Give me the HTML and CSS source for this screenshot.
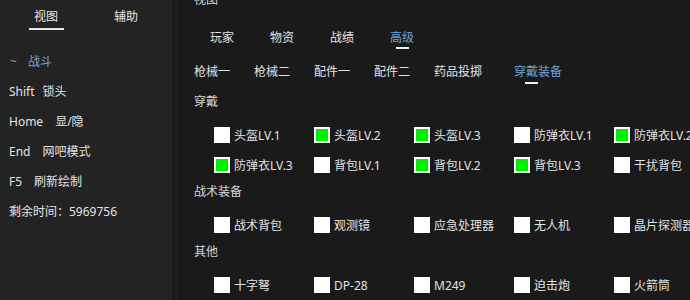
FILE: index.html
```html
<!DOCTYPE html>
<html lang="zh">
<head>
<meta charset="utf-8">
<link rel="stylesheet" href="styles.css">
</head>
<body>
<div class="app">
  <aside class="side">
    <div class="side-tabs">
      <div class="side-tab active">视图</div>
      <div class="side-tab">辅助</div>
    </div>
    <ul class="side-list">
      <li class="side-item current"><span class="tilde">~</span>战斗</li>
      <li class="side-item"><span class="key key-shift">Shift</span>锁头</li>
      <li class="side-item"><span class="key">Home</span>显/隐</li>
      <li class="side-item"><span class="key">End</span>网吧模式</li>
      <li class="side-item"><span class="key">F5</span>刷新绘制</li>
      <li class="side-item">剩余时间：5969756</li>
    </ul>
  </aside>
  <div class="divider"></div>
  <main class="main">
    <div class="title">视图</div>
    <div class="tabs tabs-top">
      <div class="tab">玩家</div>
      <div class="tab">物资</div>
      <div class="tab">战绩</div>
      <div class="tab active ul-center">高级</div>
    </div>
    <div class="tabs tabs-sub">
      <div class="tab">枪械一</div>
      <div class="tab">枪械二</div>
      <div class="tab">配件一</div>
      <div class="tab">配件二</div>
      <div class="tab wide">药品投掷</div>
      <div class="tab active ul-left">穿戴装备</div>
    </div>

    <div class="section-label">穿戴</div>
    <div class="grid">
      <label class="cb"><span class="box"></span>头盔LV.1</label>
      <label class="cb"><span class="box on"></span>头盔LV.2</label>
      <label class="cb"><span class="box on"></span>头盔LV.3</label>
      <label class="cb"><span class="box"></span>防弹衣LV.1</label>
      <label class="cb"><span class="box on"></span>防弹衣LV.2</label>
      <label class="cb"><span class="box on"></span>防弹衣LV.3</label>
      <label class="cb"><span class="box"></span>背包LV.1</label>
      <label class="cb"><span class="box on"></span>背包LV.2</label>
      <label class="cb"><span class="box on"></span>背包LV.3</label>
      <label class="cb"><span class="box"></span>干扰背包</label>
    </div>

    <div class="section-label">战术装备</div>
    <div class="grid">
      <label class="cb"><span class="box"></span>战术背包</label>
      <label class="cb"><span class="box"></span>观测镜</label>
      <label class="cb"><span class="box"></span>应急处理器</label>
      <label class="cb"><span class="box"></span>无人机</label>
      <label class="cb"><span class="box"></span>晶片探测器</label>
    </div>

    <div class="section-label">其他</div>
    <div class="grid">
      <label class="cb"><span class="box"></span>十字弩</label>
      <label class="cb"><span class="box"></span>DP-28</label>
      <label class="cb"><span class="box"></span>M249</label>
      <label class="cb"><span class="box"></span>迫击炮</label>
      <label class="cb"><span class="box"></span>火箭筒</label>
    </div>
  </main>
</div>
</body>
</html>
```

FILE: styles.css
```css
html, body {
  margin: 0;
  padding: 0;
  width: 690px;
  height: 300px;
  overflow: hidden;
  background: #1a1a1a;
}

body {
  font-family: "Noto Sans", "Noto Sans CJK SC", sans-serif;
  font-size: 12px;
  color: #e2e2e2;
}

.app {
  display: flex;
  width: 690px;
  height: 300px;
  overflow: hidden;
}

/* Sidebar */
.side {
  width: 172px;
  flex: none;
  background: #232323;
  height: 300px;
}

.side-tabs {
  display: flex;
  padding-left: 6px;
  height: 34px;
}

.side-tab {
  position: relative;
  width: 80px;
  text-align: center;
  line-height: 34px;
  color: #e6e6e6;
}

.side-tab.active::after {
  content: "";
  position: absolute;
  left: 23px;
  width: 35px;
  top: 28px;
  height: 2px;
  background: #e8e8e8;
}

.side-list {
  list-style: none;
  margin: 13px 0 0;
  padding: 0 0 0 9px;
}

.side-item {
  height: 30px;
  line-height: 30px;
  white-space: nowrap;
  color: #e2e2e2;
}

.side-item.current {
  color: #6fa3d6;
}

.tilde {
  color: #8a9cb0;
  margin-left: 1px;
  margin-right: 11px;
}

.key {
  margin-right: 12px;
}

.key-shift {
  margin-right: 8px;
}

.divider {
  width: 6px;
  flex: none;
  background: linear-gradient(to right, #1c1c1c, #1e1e1e);
}

/* Main */
.main {
  flex: 1;
  min-width: 0;
  padding-left: 16px;
  background: #1a1a1a;
  overflow: hidden;
}

.title {
  height: 20px;
  line-height: 20px;
  margin-top: -10px;
  color: #d8d8d8;
}

.tabs {
  display: flex;
  height: 24px;
  line-height: 24px;
  white-space: nowrap;
}

.tabs-top {
  margin-top: 16px;
  padding-left: 16px;
}

.tabs-sub {
  margin-top: 10px;
}

.tab {
  position: relative;
  width: 60px;
  flex: none;
  color: #e2e2e2;
}

.tab.wide {
  width: 80px;
}

.tab.active {
  color: #6fa3d6;
}

.tab.active::after {
  content: "";
  position: absolute;
  width: 13px;
  height: 2px;
  background: #eeeeee;
}

.tab.ul-center::after {
  left: 6px;
  top: 21px;
}

.tab.ul-left::after {
  left: 11px;
  top: 22px;
}

.section-label {
  height: 20px;
  line-height: 20px;
  margin-top: 8px;
  color: #d6d6d6;
}

.grid + .section-label {
  margin-top: 0;
}

.grid {
  display: grid;
  grid-template-columns: repeat(5, 100px);
  grid-auto-rows: 30px;
  margin-left: 20px;
  padding-top: 8px;
  padding-bottom: 2px;
  width: 500px;
}

.cb {
  display: flex;
  align-items: center;
  gap: 4px;
  white-space: nowrap;
  color: #e2e2e2;
}

.box {
  width: 16px;
  height: 16px;
  flex: none;
  box-sizing: border-box;
  background: #ffffff;
}

.box.on {
  border: 2px solid #ffffff;
  background: #00f000;
}
```
